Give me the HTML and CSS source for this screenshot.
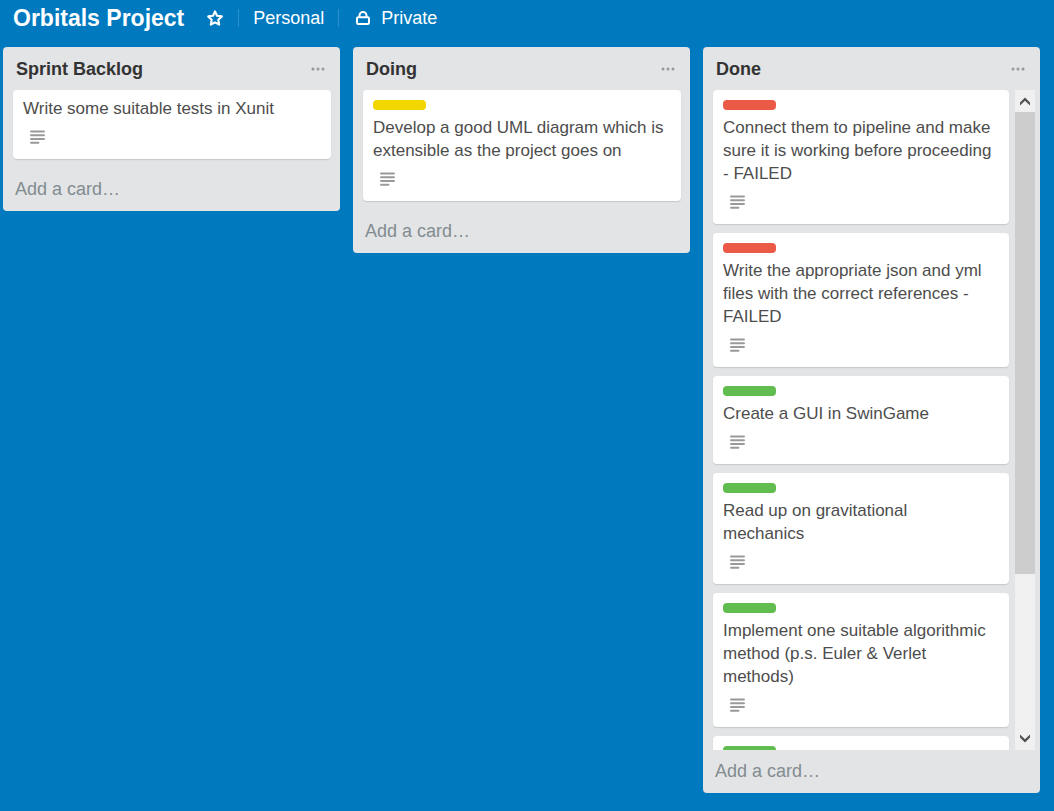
FILE: index.html
```html
<!DOCTYPE html>
<html lang="en">
<head>
<meta charset="utf-8">
<title>Orbitals Project</title>
<link rel="stylesheet" href="styles.css">
</head>
<body>
<svg class="defs" aria-hidden="true">
  <symbol id="desc" viewBox="0 0 15 14"><path d="M1 1.500h13M1 5.200h13M1 9h13M1 12.700h7.500" stroke="currentColor" stroke-width="1.900" stroke-linecap="round"/></symbol>
  <symbol id="dots" viewBox="0 0 14 4"><g fill="currentColor"><circle cx="2" cy="2" r="1.500"/><circle cx="7" cy="2" r="1.500"/><circle cx="12" cy="2" r="1.500"/></g></symbol>
</svg>
<header class="board-header">
  <h1 class="board-title">Orbitals Project</h1>
  <button class="head-btn star" aria-label="Star board"><svg width="18" height="18" viewBox="0 0 18 18"><path d="M9 2.400l2 4.400 4.800.6-3.500 3.400.9 4.900L9 13.400l-4.200 2.300.9-4.900L2.200 7.400l4.800-.6z" fill="none" stroke="currentColor" stroke-width="2.100" stroke-linejoin="round"/></svg></button>
  <button class="head-btn team">Personal</button>
  <button class="head-btn"><svg width="16" height="16" viewBox="0 0 16 16" fill="none" stroke="currentColor" stroke-width="2"><rect x="2" y="7.200" width="12" height="6.800" rx="1.200"/><path d="M4.500 7V5.400a3.500 3.400 0 0 1 7 0V7"/></svg>Private</button>
</header>
<main class="board">
  <section class="list">
    <header class="list-head"><h2>Sprint Backlog</h2><button aria-label="List actions"><svg width="14" height="4"><use href="#dots"/></svg></button></header>
    <div class="list-body"><div class="cards">
      <article class="card"><p>Write some suitable tests in Xunit</p><svg class="desc"><use href="#desc"/></svg></article>
    </div></div>
    <button class="add">Add a card…</button>
  </section>
  <section class="list">
    <header class="list-head"><h2>Doing</h2><button aria-label="List actions"><svg width="14" height="4"><use href="#dots"/></svg></button></header>
    <div class="list-body"><div class="cards">
      <article class="card"><span class="label yellow"></span><p>Develop a good UML diagram which is extensible as the project goes on</p><svg class="desc"><use href="#desc"/></svg></article>
    </div></div>
    <button class="add">Add a card…</button>
  </section>
  <section class="list scrolling">
    <header class="list-head"><h2>Done</h2><button aria-label="List actions"><svg width="14" height="4"><use href="#dots"/></svg></button></header>
    <div class="list-body">
      <div class="cards">
        <article class="card"><span class="label red"></span><p>Connect them to pipeline and make sure it is working before proceeding - FAILED</p><svg class="desc"><use href="#desc"/></svg></article>
        <article class="card"><span class="label red"></span><p>Write the appropriate json and yml files with the correct references - FAILED</p><svg class="desc"><use href="#desc"/></svg></article>
        <article class="card"><span class="label green"></span><p>Create a GUI in SwinGame</p><svg class="desc"><use href="#desc"/></svg></article>
        <article class="card"><span class="label green"></span><p>Read up on gravitational<br>mechanics</p><svg class="desc"><use href="#desc"/></svg></article>
        <article class="card"><span class="label green"></span><p>Implement one suitable algorithmic method (p.s. Euler &amp; Verlet methods)</p><svg class="desc"><use href="#desc"/></svg></article>
        <article class="card"><span class="label green"></span></article>
      </div>
      <div class="scrollbar" aria-hidden="true">
        <svg class="arrow" viewBox="0 0 20 22"><path d="M5 15.500v-3L10 7.500l5 5v3l-5-4.700z"/></svg>
        <div class="track"><div class="thumb"></div></div>
        <svg class="arrow" viewBox="0 0 20 22"><path d="M5 6.500v3l5 5 5-5v-3l-5 4.700z"/></svg>
      </div>
    </div>
    <button class="add">Add a card…</button>
  </section>
</main>
</body>
</html>
```
FILE: styles.css
```css
* { box-sizing: border-box; }
body {
  margin: 0;
  height: 100vh;
  display: flex;
  flex-direction: column;
  background: #0079bf;
  color: #4d4d4d;
  font: 18px/23px "Liberation Sans", Arial, sans-serif;
}
h1, h2, p { margin: 0; }
button {
  border: 0;
  padding: 0;
  background: none;
  font: inherit;
  color: inherit;
  cursor: pointer;
}
.defs { position: absolute; width: 0; height: 0; }

.board-header {
  display: flex;
  align-items: center;
  height: 36px;
  padding: 0 13px;
  color: #fff;
  flex: none;
}
.board-title { font-size: 23px; line-height: 28px; }
.head-btn { display: flex; align-items: center; gap: 10px; }
.star { margin: 0 14px 0 22px; }
.team {
  padding: 0 14px;
  margin-right: 16px;
  border: solid #2a8fca;
  border-width: 0 1px;
  line-height: 18px;
}

.board {
  flex: 1;
  min-height: 0;
  display: flex;
  align-items: flex-start;
  gap: 13px;
  padding: 11px 14px 18px 3px;
}
.list {
  flex: 1;
  min-width: 0;
  max-height: 100%;
  display: flex;
  flex-direction: column;
  background: #e2e4e6;
  border-radius: 4px;
}
.list-head {
  display: flex;
  align-items: center;
  justify-content: space-between;
  height: 43px;
  padding: 0 15px 0 13px;
  flex: none;
}
.list-head h2 { padding-top: 2px; font-size: 18px; color: #333; }
.list-head button { display: flex; color: #999; }
.list-body {
  flex: 0 1 auto;
  min-height: 0;
  display: flex;
  gap: 6px;
  padding: 0 9px 0 10px;
  overflow: hidden;
}
.cards {
  flex: 1;
  min-width: 0;
  display: flex;
  flex-direction: column;
  gap: 9px;
  padding-bottom: 10px;
}
.card {
  padding: 7px 8px 15px 10px;
  background: #fff;
  border-radius: 4px;
  box-shadow: 0 1px 1px #c4c9cc;
  font-size: 17px;
  flex: none;
}
.label {
  display: block;
  width: 53px;
  height: 10px;
  margin: 3px 0 6px;
  border-radius: 4px;
}
.yellow { background: #f2d600; }
.red { background: #eb5a46; }
.green { background: #61bd4f; }
.desc {
  display: block;
  width: 15px;
  height: 14px;
  margin: 10px 0 0 7px;
  color: #999;
}
.add {
  padding: 9px 12px 10px;
  text-align: left;
  color: #838c91;
}
.scrolling .list-body { padding-right: 5px; }
.scrolling .add { padding: 10px 12px; }
.scrollbar {
  width: 20px;
  flex: none;
  display: flex;
  flex-direction: column;
  background: #f0f0f0;
}
.arrow { width: 20px; height: 22px; fill: #505050; flex: none; }
.track { flex: 1; }
.thumb { height: 75%; background: #cdcdcd; }
```
